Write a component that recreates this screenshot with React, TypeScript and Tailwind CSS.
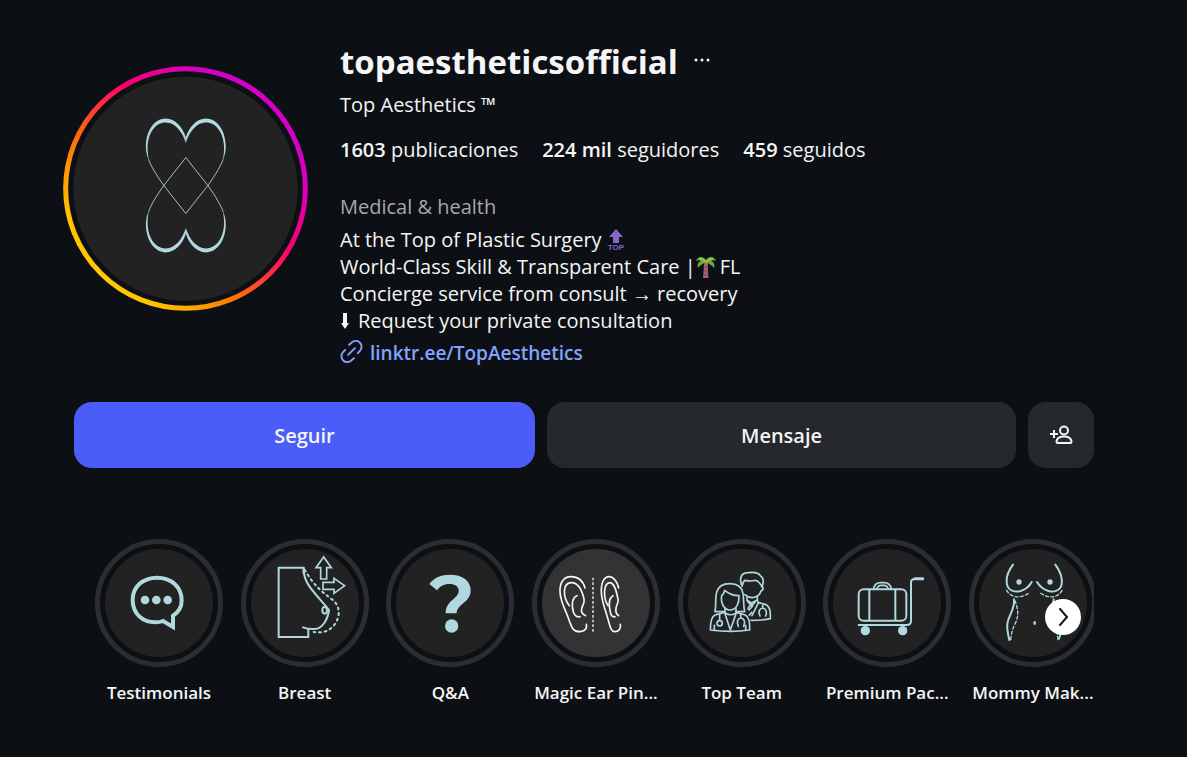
import React from "react";

interface Highlight {
    title: string;
    viewBox: string;
    disc: string;
    art: React.ReactNode;
}

const stats = [
    { value: "1603", label: "publicaciones" },
    { value: "224 mil", label: "seguidores" },
    { value: "459", label: "seguidos" },
];

const highlights: Highlight[] = [
    {
        title: "Testimonials",
        viewBox: "17 27 384 384",
        disc: "bg-[#222222]",
        art: (
            <>
                <path d="M251 257 V291 L221 273 C214 276 207 277 198 277 C160 277 130 252 130 210 C130 170 161 143 203 143 C246 143 277 171 277 211 C277 231 268 247 251 257 Z" strokeWidth="12" />
                <g fill="currentColor" stroke="none">
                    <circle cx="167" cy="210" r="13" />
                    <circle cx="201" cy="210" r="13" />
                    <circle cx="235" cy="210" r="13" />
                </g>
            </>
        ),
    },
    {
        title: "Breast",
        viewBox: "19 27 384 384",
        disc: "bg-[#222222]",
        art: (
            <g strokeWidth="6">
                <path d="M207 131 V113 H132 V321 H221 V297" />
                <path d="M207 119 C207 165 250 197 283 240 C279 270 262 297 240 297 C226 298 215 296 205 292" strokeLinecap="round" />
                <ellipse cx="270" cy="241" rx="7" ry="10" />
                <path d="M210 119 C237 166 261 185 292 208 C318 227 318 262 297 287 C280 307 258 309 237 306" strokeDasharray="6 11" strokeLinecap="round" />
                <path d="M267 81 L290 113 H276 V147 H258 V113 H244 Z" strokeWidth="5" />
                <path d="M330 167 L298 190 V178 H265 V157 H298 V145 Z" strokeWidth="5" />
            </g>
        ),
    },
    {
        title: "Q&A",
        viewBox: "20 27 384 384",
        disc: "bg-[#222222]",
        art: (
            <g fill="currentColor" stroke="none">
                <path d="M150 162 C164 143 185 134 212 134 C250 134 274 152 274 181 C274 218 233 222 232 250 H199 C199 210 238 207 238 182 C238 170 227 162 210 162 C194 162 181 169 173 181 Z" />
                <circle cx="217" cy="288" r="20" />
            </g>
        ),
    },
    {
        title: "Magic Ear Pin...",
        viewBox: "21 27 384 384",
        disc: "bg-[#333333]",
        art: (
            <g stroke="#f5f5f5" strokeWidth="5" strokeLinecap="round">
                <path d="M180 174 C174 152 158 140 138 140 C116 140 104 157 105 185 C106 215 121 238 130 264 C139 290 143 306 165 305 C178 304 187 297 184 283" />
                <path d="M133 227 C113 201 112 160 138 158 C160 157 171 181 177 207 C180 219 172 225 170 236 C167 247 173 253 182 257" />
                <path d="M156 197 C141 203 139 225 145 245 C148 257 154 262 165 260" />
                <path d="M281 174 C276 152 264 140 253 140 C236 140 228 159 229 187 C230 214 240 236 247 261 C255 288 257 306 271 305 C282 304 288 296 286 283" />
                <path d="M249 227 C233 201 236 160 254 158 C268 158 274 182 279 207 C281 219 274 224 273 235 C271 247 275 253 281 257" />
                <path d="M264 197 C252 205 251 225 255 242 C257 256 262 262 270 260" />
                <path d="M204 143 V306" strokeWidth="4" strokeDasharray="8 6" strokeLinecap="butt" />
            </g>
        ),
    },
    {
        title: "Top Team",
        viewBox: "23 27 384 384",
        disc: "bg-[#222222]",
        art: (
            <g strokeWidth="5" strokeLinejoin="round" strokeLinecap="round">
                {/* woman in front */}
                <path d="M161 245 H134 C138 225 134 205 139 187 C144 168 160 161 179 161 C200 161 214 171 218 190 C221 210 219 228 223 245 H197" />
                <path d="M163 181 C177 193 192 197 206 197 C207 220 198 240 180 240 C162 240 150 220 154 197 C159 193 162 187 163 181 Z" />
                <path d="M164 236 V251 L180 300 L197 251 V236 M166 250 C175 255 187 255 195 250" />
                <path d="M162 247 L134 255 C123 260 120 278 120 300 C158 305 204 305 238 300 C239 279 236 261 225 255 L198 247" />
                <path d="M148 252 V270 M132 286 V301 M226 286 V301" />
                <circle cx="148" cy="280" r="8" />
                <path d="M211 253 V264 M204 289 C198 275 202 265 212 264 C222 265 226 276 220 289" />
                {/* man behind */}
                <path d="M213 163 C207 143 213 128 234 128 C248 126 264 127 270 137 C280 142 281 158 275 170 C269 159 265 152 255 151 C240 156 228 151 223 151 C219 155 216 162 215 169" />
                <path d="M275 170 C281 172 278 180 272 183 C269 194 258 202 246 203 C236 203 229 199 223 194" />
                <path d="M230 202 V211 L243 219 L261 210 V198 M243 219 L233 236 M261 211 L264 219 L245 257 M231 213 L243 227 L254 218 M236 240 L247 228 M237 256 L244 247" />
                <path d="M265 218 L285 223 C301 228 301 248 300 266 C280 271 261 271 242 271 M277 222 V233 M269 258 C263 244 268 235 277 234 C287 236 291 246 286 258" />
            </g>
        ),
    },
    {
        title: "Premium Pac...",
        viewBox: "24 27 384 384",
        disc: "bg-[#222222]",
        art: (
            <g strokeWidth="6" strokeLinecap="round">
                <rect x="131" y="178" width="143" height="94" rx="15" />
                <path d="M163 178 V272 M241 178 V272" strokeLinecap="butt" />
                <path d="M176 177 C178 162 188 158 197 158 H207 C219 158 227 166 229 177 M185 177 C188 168 193 166 199 166 H207 C214 166 218 171 220 177" strokeWidth="5" />
                <path d="M131 285 H275 C284 285 288 281 288 273 V158 C288 150 292 147 299 147 H323" />
                <g fill="currentColor" stroke="none">
                    <circle cx="151" cy="302" r="14" />
                    <circle cx="263" cy="302" r="14" />
                    <rect x="296" y="142" width="31" height="9" rx="3" />
                </g>
            </g>
        ),
    },
    {
        title: "Mommy Mak...",
        viewBox: "26 27 384 384",
        disc: "bg-[#222222]",
        art: (
            <g strokeWidth="6" strokeLinecap="round">
                <path d="M158 104 C143 124 136 144 140 163 C144 182 163 188 181 183 C197 178 207 169 214 156" />
                <path d="M285 104 C300 124 307 144 304 163 C300 182 281 188 264 183 C248 178 238 169 230 156" />
                <g fill="currentColor" stroke="none">
                    <circle cx="176" cy="156" r="8" />
                    <circle cx="269" cy="156" r="8" />
                    <ellipse cx="223" cy="279" rx="4" ry="6" />
                </g>
                <g strokeWidth="4" strokeDasharray="9 7">
                    <path d="M139 181 C153 205 182 206 206 189" />
                    <path d="M305 181 C292 205 264 206 240 189" />
                    <path d="M164 212 C172 235 178 257 163 284 C156 298 153 312 151 329" />
                    <path d="M279 212 C271 235 266 257 281 284 C288 298 291 312 293 329" />
                </g>
                <path d="M161 208 C164 240 144 256 141 281 C139 298 143 314 147 330" />
                <path d="M280 208 C278 240 298 256 301 281 C304 298 301 314 296 326" />
            </g>
        ),
    },
];

function Avatar() {
    return (
        <svg viewBox="41 49 736 736" className="size-[245px]" fill="none" role="img" aria-label="Top Aesthetics">
            <defs>
                <linearGradient id="story-ring" gradientUnits="userSpaceOnUse" x1="149" y1="677" x2="669" y2="157">
                    <stop offset="0" stopColor="#ffc900" />
                    <stop offset="0.08" stopColor="#ffc300" />
                    <stop offset="0.3" stopColor="#ff7a00" />
                    <stop offset="0.62" stopColor="#ff0069" />
                    <stop offset="0.88" stopColor="#d300c5" />
                    <stop offset="1" stopColor="#d300c5" />
                </linearGradient>
                <g id="heart-half">
                    <path d="M299 332 C292 317 290 302 290 290 C291 240 318 207 350 207 C378 207 401 234 410 263 V280 C399 246 378 219 350 219 C318 219 297 250 295 293 C295 310 297 320 299 332 Z" fill="#b0d8df" />
                    <path d="M298 329 C304 347 319 373 343 407 L410 492" stroke="#9fc3c9" strokeWidth="3" />
                </g>
                <g id="heart">
                    <use href="#heart-half" />
                    <use href="#heart-half" transform="translate(820 0) scale(-1 1)" />
                </g>
            </defs>
            <circle cx="409" cy="417" r="360" stroke="url(#story-ring)" strokeWidth="15" />
            <circle cx="409" cy="418" r="337" fill="#222222" />
            <use href="#heart" />
            <use href="#heart" transform="translate(0 816) scale(1 -1)" />
        </svg>
    );
}

function TopEmoji() {
    return (
        <svg viewBox="0 0 18 22" className="inline-block h-[22px] w-[18px] align-[-4px]" role="img" aria-label="TOP">
            <path d="M9 0 L16 8 H12 V14 H6 V8 H2 Z" fill="#8467c6" />
            <text x="9" y="21" textAnchor="middle" fontSize="8" fontWeight="700" fontFamily="Liberation Sans" fill="#8467c6">TOP</text>
        </svg>
    );
}

function PalmEmoji() {
    return (
        <svg viewBox="0 0 20 22" className="mr-1 inline-block h-[22px] w-[20px] align-[-4px]" role="img" aria-label="palm tree">
            <path d="M8 6 L12 6 C12 11 12 16 12.500 22 H7 C7.500 16 8 11 8 6 Z" fill="#a5636b" />
            <path d="M7.500 11 H12 M7.500 15 H12 M7.500 19 H12" stroke="#7f4a55" />
            <path d="M10 4 C7 0 2 0 0 5 C2 4 4 4 5 5 C2 6 1 9 2 12 C4 9 7 8 10 6 C13 8 16 9 18 12 C19 9 18 6 15 5 C17 4 18 4 20 5 C18 0 13 0 10 4 Z" fill="#6cab3c" />
            <path d="M3 3 C6 2 8 4 10 6 C12 4 14 2 17 3" stroke="#93cc55" strokeWidth="1.500" fill="none" />
        </svg>
    );
}

export default function App() {
    return (
        <main className="min-h-screen bg-[#0c1014] pr-[93px] pl-[74px] font-['Open_Sans','Noto_Sans',sans-serif] text-[20px] leading-[27px] text-[#f5f5f5]">
            <header className="flex gap-8 pt-10">
                <div className="mt-[26px] -ml-[11px] shrink-0">
                    <Avatar />
                </div>
                <div className="min-w-0">
                    <div className="flex items-center gap-4">
                        <h1 className="text-[33px] leading-[44px] font-bold">topaestheticsofficial</h1>
                        <button type="button" aria-label="Opciones">
                            <svg viewBox="0 0 16 16" className="size-4" fill="currentColor">
                                <circle cx="2" cy="6" r="1.500" />
                                <circle cx="8" cy="6" r="1.500" />
                                <circle cx="14" cy="6" r="1.500" />
                            </svg>
                        </button>
                    </div>
                    <p className="mt-[7px]">Top Aesthetics ™</p>
                    <ul className="mt-[18px] flex gap-6">
                        {stats.map((stat) => (
                            <li key={stat.label}>
                                <span className="font-semibold">{stat.value}</span> {stat.label}
                            </li>
                        ))}
                    </ul>
                    <p className="mt-[30px] text-[#a8a8a8]">Medical &amp; health</p>
                    <div className="mt-[6px]">
                        <p>At the Top of Plastic Surgery <TopEmoji /></p>
                        <p>World-Class Skill &amp; Transparent Care |<PalmEmoji />FL</p>
                        <p>Concierge service from consult → recovery</p>
                        <p>
                            <svg viewBox="0 0 10 16" className="mr-2 inline-block h-4 w-[10px] align-[-1px]" fill="currentColor" aria-hidden="true">
                                <path d="M3 0 H7 V10 H9 L5 16 L1 10 H3 Z" />
                            </svg>
                            Request your private consultation
                        </p>
                    </div>
                    <a href="#" className="mt-[6px] flex w-fit gap-[7px] text-[19px] font-semibold text-[#85a1ff]">
                        <svg viewBox="0 0 24 24" className="size-[23px]" fill="none" stroke="currentColor" strokeWidth="2" strokeLinecap="round" aria-hidden="true">
                            <path d="M9.500 5 L12 2.800 A6.100 6.100 0 0 1 20.800 11.300 L18.500 13.700" />
                            <path d="M14.500 19 L12 21.200 A6.100 6.100 0 0 1 3.200 12.700 L5.500 10.300" />
                            <path d="M8.500 15.500 L15.500 8.500" />
                        </svg>
                        linktr.ee/TopAesthetics
                    </a>
                </div>
            </header>

            <div className="mt-[35px] flex h-[66px] gap-3 font-semibold">
                <button type="button" className="grow-[461] basis-0 rounded-[18px] bg-[#4a5df9]">Seguir</button>
                <button type="button" className="grow-[469] basis-0 rounded-[18px] bg-[#25282c]">Mensaje</button>
                <button type="button" aria-label="Cuentas similares" className="flex w-[66px] shrink-0 items-center justify-center rounded-[18px] bg-[#25282c]">
                    <svg viewBox="0 0 24 24" className="size-6" fill="none" stroke="currentColor" strokeWidth="2" aria-hidden="true">
                        <circle cx="15" cy="7.500" r="4" />
                        <path d="M7.500 18.500 C8 15 11 13.500 15 13.500 C19 13.500 22 15 22.500 18.500 C22.500 19.600 22 20 21 20 H9 C8 20 7.500 19.600 7.500 18.500 Z" />
                        <path d="M1 11 H9 M5 7 V15" />
                    </svg>
                </button>
            </div>

            <section className="relative mt-[71px] overflow-hidden">
                <ul className="-mr-[3px] ml-[21px] flex justify-between">
                    {highlights.map((item) => (
                        <li key={item.title} className="w-32">
                            <a href="#" className="flex flex-col items-center gap-3">
                                <span className="flex size-32 rounded-full border-[5px] border-[#2a2e33] p-[5px]">
                                    <span className={`flex size-[108px] items-center justify-center rounded-full ${item.disc}`}>
                                        <svg viewBox={item.viewBox} className="size-32 shrink-0 text-[#b0d8df]" fill="none" stroke="currentColor" aria-hidden="true">
                                            {item.art}
                                        </svg>
                                    </span>
                                </span>
                                <span className="text-[17px] font-semibold whitespace-nowrap">{item.title}</span>
                            </a>
                        </li>
                    ))}
                </ul>
                <button type="button" aria-label="Siguiente" className="absolute top-[60px] right-[13px] flex size-9 items-center justify-center rounded-full bg-white text-[#15181c]">
                    <svg viewBox="0 0 18 18" className="size-[18px]" fill="none" stroke="currentColor" strokeWidth="2" strokeLinecap="round" strokeLinejoin="round">
                        <path d="M6 1 L13 9 L6 17" />
                    </svg>
                </button>
            </section>
        </main>
    );
}
